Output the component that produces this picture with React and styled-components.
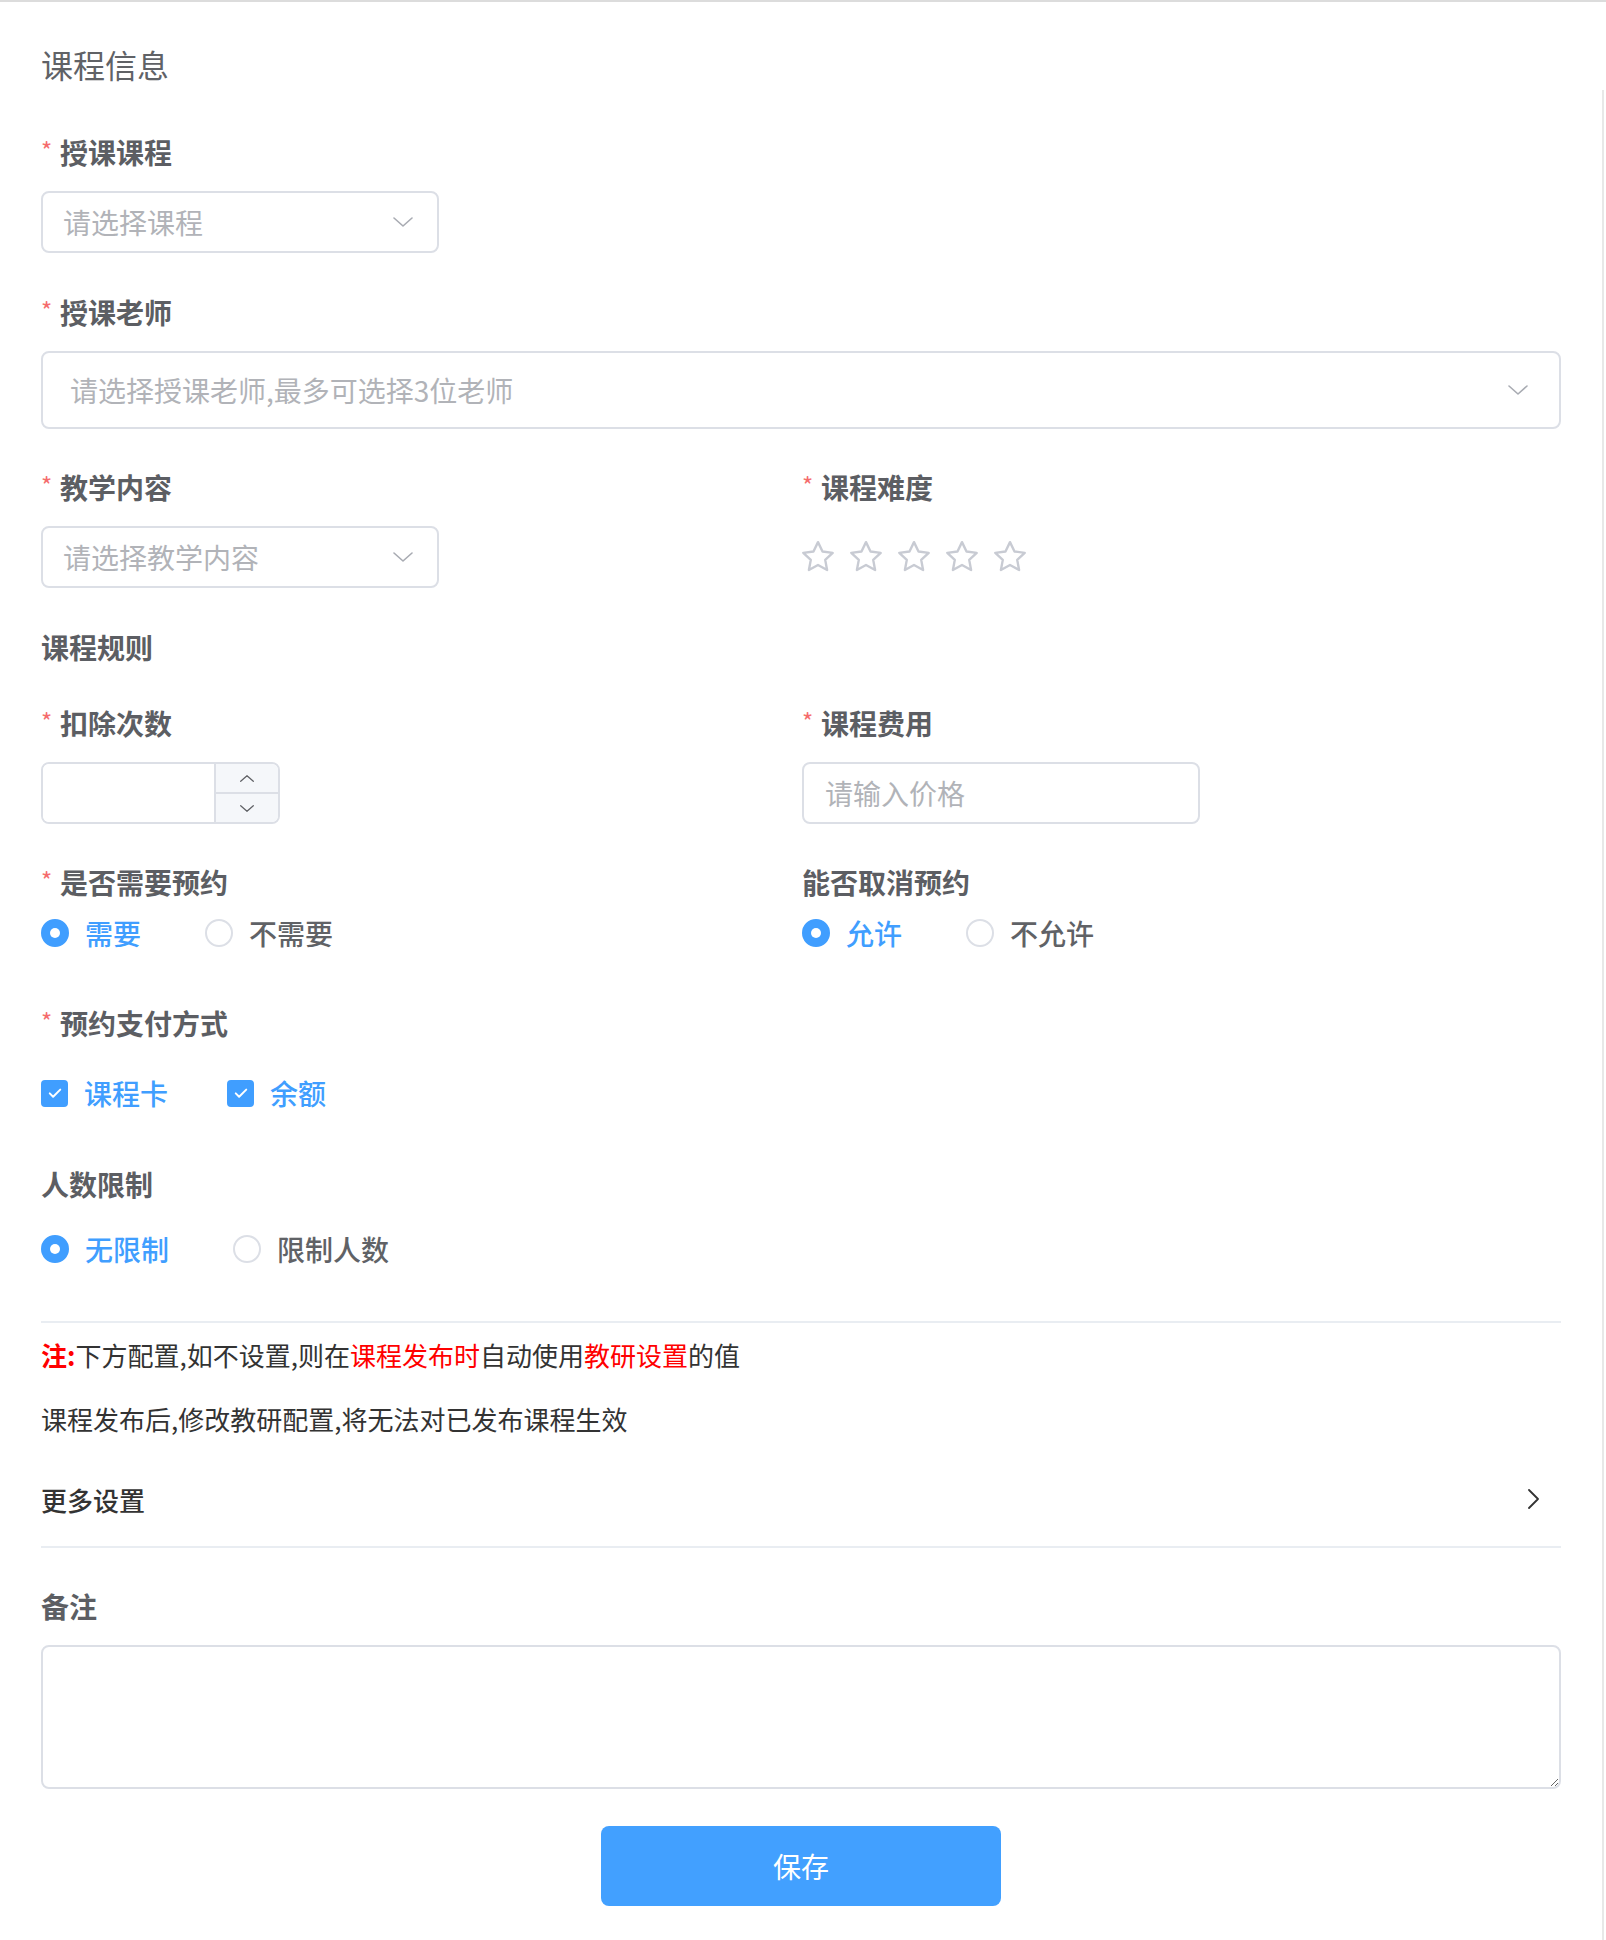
import React, { useState } from "react";
import styled, { createGlobalStyle } from "styled-components";

const GlobalStyle = createGlobalStyle`
  html, body {
    margin: 0;
    padding: 0;
    background: #fff;
  }
  body {
    font-family: "Noto Sans CJK SC", "Noto Sans", sans-serif;
  }
  * {
    box-sizing: border-box;
  }
`;

const Page = styled.div`
  width: 1606px;
  min-height: 1940px;
  border-top: 2px solid #dcdcdc;
  padding: 0 45px 0 41px;
`;

const ScrollTrack = styled.div`
  position: fixed;
  top: 90px;
  bottom: 0;
  right: 2px;
  width: 2px;
  background: #e8e8e8;
`;

const SectionTitle = styled.div`
  margin-top: 40px;
  font-size: 32px;
  line-height: 44px;
  color: #606266;
`;

const FormItem = styled.div`
  margin-top: ${(p) => p.$mt || 0}px;
`;

const Label = styled.div`
  font-size: 28px;
  line-height: 40px;
  font-weight: 700;
  color: #5c5e63;
  margin-bottom: ${(p) => (p.$mb === undefined ? 19 : p.$mb)}px;
  display: flex;
  align-items: center;
`;

const Asterisk = styled.span`
  display: inline-block;
  width: 19px;
  color: #f56c6c;
  font-size: 24px;
  font-weight: 400;
  line-height: 40px;
  position: relative;
  top: -2px;
`;

const Row = styled.div`
  display: grid;
  grid-template-columns: 761px 1fr;
  margin-top: ${(p) => p.$mt || 0}px;
`;

const SelectBox = styled.div`
  width: ${(p) => p.$width || "398px"};
  height: ${(p) => p.$height || 62}px;
  border: 2px solid #dcdfe6;
  border-radius: 8px;
  display: flex;
  align-items: center;
  justify-content: space-between;
  padding: 0 ${(p) => p.$pr || 24}px 0 ${(p) => p.$pl || 20}px;
  background: #fff;
`;

const Placeholder = styled.span`
  font-size: 28px;
  color: #b1b3b8;
`;

const Chevron = ({ dir = "down", size = 20, color = "#a8abb2", sw = 1.6 }) => (
  <svg
    width={size}
    height={size / 2}
    viewBox="0 0 20 10"
    fill="none"
    stroke={color}
    strokeWidth={sw}
    strokeLinecap="round"
    strokeLinejoin="round"
  >
    {dir === "down" ? <path d="M1 1l9 8 9-8" /> : <path d="M1 9l9-8 9 8" />}
  </svg>
);

const Rating = styled.div`
  display: flex;
  align-items: center;
  gap: 10px;
  height: 62px;
  margin-left: -3px;
`;

const StarIcon = () => (
  <svg width="38" height="38" viewBox="0 0 24 24" fill="none" stroke="#c8cbd3" strokeWidth="1.5" strokeLinejoin="round">
    <path d="M12 2.6l2.85 5.9 6.45.85-4.75 4.45 1.2 6.4L12 17.05l-5.75 3.15 1.2-6.4-4.75-4.45 6.45-.85z" />
  </svg>
);

const NumberBox = styled.div`
  width: 239px;
  height: 62px;
  border: 2px solid #dcdfe6;
  border-radius: 8px;
  display: flex;
  overflow: hidden;
`;

const NumberField = styled.input`
  flex: 1;
  min-width: 0;
  border: none;
  outline: none;
  font-size: 28px;
  padding: 0 16px;
  font-family: inherit;
`;

const Stepper = styled.div`
  width: 64px;
  border-left: 2px solid #dcdfe6;
  background: #f5f7fa;
  display: flex;
  flex-direction: column;
`;

const StepBtn = styled.div`
  flex: 1;
  display: flex;
  align-items: center;
  justify-content: center;
  & + & {
    border-top: 2px solid #dcdfe6;
  }
`;

const TextInput = styled.input`
  width: 398px;
  height: 62px;
  border: 2px solid #dcdfe6;
  border-radius: 8px;
  outline: none;
  padding: 0 21px;
  font-size: 28px;
  font-family: inherit;
  color: #606266;
  &::placeholder {
    color: #b1b3b8;
  }
`;

const OptionRow = styled.div`
  display: flex;
  align-items: center;
  height: 40px;
  margin-top: ${(p) => p.$mt || 0}px;
`;

const RadioItem = styled.label`
  display: flex;
  align-items: center;
  margin-right: 64px;
  cursor: pointer;
  font-size: 28px;
  font-weight: 500;
  color: ${(p) => (p.$checked ? "#409eff" : "#606266")};
`;

const RadioCircle = styled.span`
  width: 28px;
  height: 28px;
  border-radius: 50%;
  border: 2px solid ${(p) => (p.$checked ? "#409eff" : "#dcdfe6")};
  background: ${(p) => (p.$checked ? "#409eff" : "#fff")};
  display: flex;
  align-items: center;
  justify-content: center;
  margin-right: 16px;
  &::after {
    content: "";
    width: 10px;
    height: 10px;
    border-radius: 50%;
    background: #fff;
    display: ${(p) => (p.$checked ? "block" : "none")};
  }
`;

const CheckItem = styled.label`
  display: flex;
  align-items: center;
  margin-right: 59px;
  cursor: pointer;
  font-size: 28px;
  font-weight: 500;
  color: ${(p) => (p.$checked ? "#409eff" : "#606266")};
`;

const CheckBox = styled.span`
  width: 27px;
  height: 27px;
  border-radius: 4px;
  background: ${(p) => (p.$checked ? "#409eff" : "#fff")};
  border: 2px solid ${(p) => (p.$checked ? "#409eff" : "#dcdfe6")};
  display: flex;
  align-items: center;
  justify-content: center;
  margin-right: 16px;
`;

const Divider = styled.div`
  height: 2px;
  background: #e9edf2;
  margin-top: ${(p) => p.$mt || 0}px;
`;

const Note = styled.div`
  font-size: 26px;
  line-height: 40px;
  color: #333;
  margin-top: ${(p) => p.$mt || 0}px;
`;

const Red = styled.span`
  color: #ff0000;
  font-weight: ${(p) => (p.$bold ? 700 : 400)};
`;

const MoreRow = styled.div`
  display: flex;
  align-items: center;
  justify-content: space-between;
  height: 40px;
  margin-top: 40px;
  padding-right: 22px;
  font-size: 26px;
  font-weight: 500;
  color: #333;
  cursor: pointer;
`;

const TextArea = styled.textarea`
  display: block;
  width: 100%;
  height: 144px;
  border: 2px solid #dcdfe6;
  border-radius: 8px;
  outline: none;
  resize: vertical;
  padding: 12px 20px;
  font-size: 28px;
  font-family: inherit;
  color: #606266;
`;

const SaveButton = styled.button`
  display: block;
  width: 400px;
  height: 80px;
  margin: 37px auto 0;
  border: none;
  border-radius: 8px;
  background: #42a0ff;
  color: #fff;
  font-size: 28px;
  font-family: inherit;
  cursor: pointer;
`;

const Radio = ({ checked, onClick, children }) => (
  <RadioItem $checked={checked} onClick={onClick}>
    <RadioCircle $checked={checked} />
    {children}
  </RadioItem>
);

const Check = ({ checked, onClick, children }) => (
  <CheckItem $checked={checked} onClick={onClick}>
    <CheckBox $checked={checked}>
      {checked && (
        <svg width="18" height="18" viewBox="0 0 24 24" fill="none" stroke="#fff" strokeWidth="2.6" strokeLinecap="round" strokeLinejoin="round">
          <path d="M5 12.5l4.5 4.5L19 7.5" />
        </svg>
      )}
    </CheckBox>
    {children}
  </CheckItem>
);

const App = () => {
  const [needBook, setNeedBook] = useState(true);
  const [canCancel, setCanCancel] = useState(true);
  const [card, setCard] = useState(true);
  const [balance, setBalance] = useState(true);
  const [noLimit, setNoLimit] = useState(true);

  return (
    <>
      <GlobalStyle />
      <ScrollTrack />
      <Page>
        <SectionTitle>课程信息</SectionTitle>

        <FormItem $mt={46}>
          <Label>
            <Asterisk>*</Asterisk>授课课程
          </Label>
          <SelectBox>
            <Placeholder>请选择课程</Placeholder>
            <Chevron />
          </SelectBox>
        </FormItem>

        <FormItem $mt={39}>
          <Label>
            <Asterisk>*</Asterisk>授课老师
          </Label>
          <SelectBox $width="100%" $height={78} $pl={27} $pr={31}>
            <Placeholder>请选择授课老师,最多可选择3位老师</Placeholder>
            <Chevron />
          </SelectBox>
        </FormItem>

        <Row $mt={38}>
          <FormItem>
            <Label>
              <Asterisk>*</Asterisk>教学内容
            </Label>
            <SelectBox>
              <Placeholder>请选择教学内容</Placeholder>
              <Chevron />
            </SelectBox>
          </FormItem>
          <FormItem>
            <Label>
              <Asterisk>*</Asterisk>课程难度
            </Label>
            <Rating>
              {[0, 1, 2, 3, 4].map((i) => (
                <StarIcon key={i} />
              ))}
            </Rating>
          </FormItem>
        </Row>

        <FormItem $mt={39}>
          <Label $mb={0}>课程规则</Label>
        </FormItem>

        <Row $mt={36}>
          <FormItem>
            <Label>
              <Asterisk>*</Asterisk>扣除次数
            </Label>
            <NumberBox>
              <NumberField />
              <Stepper>
                <StepBtn>
                  <Chevron dir="up" size={14} color="#606266" sw={1.8} />
                </StepBtn>
                <StepBtn>
                  <Chevron size={14} color="#606266" sw={1.8} />
                </StepBtn>
              </Stepper>
            </NumberBox>
          </FormItem>
          <FormItem>
            <Label>
              <Asterisk>*</Asterisk>课程费用
            </Label>
            <TextInput placeholder="请输入价格" />
          </FormItem>
        </Row>

        <Row $mt={38}>
          <FormItem>
            <Label $mb={0}>
              <Asterisk>*</Asterisk>是否需要预约
            </Label>
            <OptionRow $mt={11}>
              <Radio checked={needBook} onClick={() => setNeedBook(true)}>需要</Radio>
              <Radio checked={!needBook} onClick={() => setNeedBook(false)}>不需要</Radio>
            </OptionRow>
          </FormItem>
          <FormItem>
            <Label $mb={0}>能否取消预约</Label>
            <OptionRow $mt={11}>
              <Radio checked={canCancel} onClick={() => setCanCancel(true)}>允许</Radio>
              <Radio checked={!canCancel} onClick={() => setCanCancel(false)}>不允许</Radio>
            </OptionRow>
          </FormItem>
        </Row>

        <FormItem $mt={50}>
          <Label $mb={0}>
            <Asterisk>*</Asterisk>预约支付方式
          </Label>
          <OptionRow $mt={30}>
            <Check checked={card} onClick={() => setCard(!card)}>课程卡</Check>
            <Check checked={balance} onClick={() => setBalance(!balance)}>余额</Check>
          </OptionRow>
        </FormItem>

        <FormItem $mt={51}>
          <Label $mb={0}>人数限制</Label>
          <OptionRow $mt={25}>
            <Radio checked={noLimit} onClick={() => setNoLimit(true)}>无限制</Radio>
            <Radio checked={!noLimit} onClick={() => setNoLimit(false)}>限制人数</Radio>
          </OptionRow>
        </FormItem>

        <Divider $mt={52} />

        <Note $mt={12}>
          <Red $bold>注:</Red>下方配置,如不设置,则在<Red>课程发布时</Red>自动使用<Red>教研设置</Red>的值
        </Note>
        <Note $mt={24}>课程发布后,修改教研配置,将无法对已发布课程生效</Note>

        <MoreRow>
          <span>更多设置</span>
          <svg width="11" height="20" viewBox="0 0 11 20" fill="none" stroke="#333" strokeWidth="1.8" strokeLinecap="round" strokeLinejoin="round">
            <path d="M1 1l9 9-9 9" />
          </svg>
        </MoreRow>
        <Divider $mt={27} />

        <FormItem $mt={38}>
          <Label>备注</Label>
          <TextArea />
        </FormItem>

        <SaveButton>保存</SaveButton>
      </Page>
    </>
  );
};

export default App;
